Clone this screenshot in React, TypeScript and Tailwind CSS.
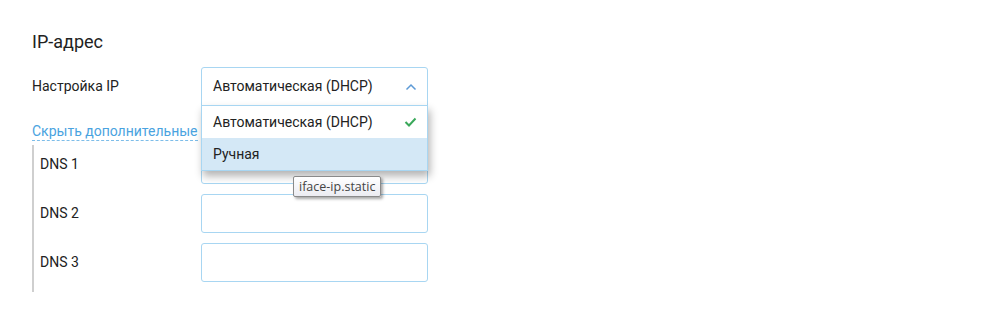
import React from "react";

const font = { fontFamily: "Roboto, 'Noto Sans', sans-serif" };

function Chevron() {
  return (
    <svg width="12" height="8" viewBox="0 0 12 8" fill="none">
      <path d="M1.5 6.5 L6 2 L10.5 6.5" stroke="#5d9ad6" strokeWidth="1.5" />
    </svg>
  );
}

function Check() {
  return (
    <svg width="13" height="10" viewBox="0 0 13 10" fill="none">
      <path d="M1.5 5 L5 8.5 L11.5 1.5" stroke="#3aa85a" strokeWidth="2" />
    </svg>
  );
}

function DnsRow({ label }: { label: string }) {
  return (
    <div className="flex items-center">
      <span className="w-[161px] text-[14px] text-[#222]">{label}</span>
      <div className="h-[39px] w-[227px] rounded-[3px] border border-[#a8d6f2] bg-white" />
    </div>
  );
}

export default function App() {
  return (
    <div className="min-h-[329px] w-[1000px] bg-white pl-[32px] pt-[30px]" style={font}>
      <h2 className="text-[18px] leading-[24px] text-[#222]">IP-адрес</h2>

      <div className="mt-[13px] flex items-center">
        <span className="w-[169px] text-[14px] text-[#222]">Настройка IP</span>
        <div className="relative">
          <div className="flex h-[39px] w-[227px] items-center justify-between rounded-t-[3px] border border-[#a8d6f2] bg-white pl-[11px] pr-[10px] text-[14px] text-[#222]">
            <span>Автоматическая (DHCP)</span>
            <Chevron />
          </div>
          <div className="absolute left-0 top-[38px] z-10 w-[227px] border border-[#a8d6f2] bg-white text-[14px] text-[#222] shadow-[2px_5px_8px_rgba(0,0,0,0.3)]">
            <div className="flex h-[32px] items-center justify-between pl-[11px] pr-[10px]">
              <span>Автоматическая (DHCP)</span>
              <Check />
            </div>
            <div className="flex h-[32px] items-center bg-[#d4e8f6] pl-[11px]">Ручная</div>
          </div>
        </div>
      </div>

      <div className="mt-[13px]">
        <span className="border-b border-dashed border-[#7dbde9] pb-[1px] text-[14px] leading-[18px] text-[#4aa3e0]">
          Скрыть дополнительные
        </span>
      </div>

      <div className="relative mt-[2px] flex w-fit flex-col gap-[10px] border-l-2 border-[#cfcfcf] pb-[10px] pl-[6px]">
        <DnsRow label="DNS 1" />
        <DnsRow label="DNS 2" />
        <DnsRow label="DNS 3" />
        <div
          className="absolute left-[259px] top-[31px] z-20 rounded-[2px] border border-[#8a8a8a] bg-gradient-to-b from-white to-[#ececf2] px-[5px] py-[2px] text-[12.5px] leading-[15px] text-[#444] shadow-[2px_2px_3px_rgba(0,0,0,0.35)]"
          style={{ fontFamily: "'Open Sans', 'DejaVu Sans', sans-serif" }}
        >
          iface-ip.static
        </div>
      </div>
    </div>
  );
}
